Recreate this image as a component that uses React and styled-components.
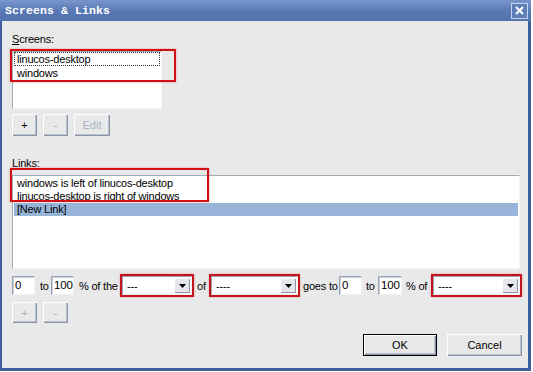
import React from "react";
import styled, { createGlobalStyle } from "styled-components";

const GlobalStyle = createGlobalStyle`
  html, body {
    margin: 0;
    padding: 0;
    background: #ffffff;
  }
  body {
    font-family: "Liberation Sans", Arial, sans-serif;
    font-size: 11px;
    letter-spacing: -0.2px;
    color: #000;
  }
`;

const Window = styled.div`
  width: 531px;
  height: 371px;
  box-sizing: border-box;
  border-left: 2px solid #3f5f9f;
  border-right: 3px solid #3f5f9f;
  border-bottom: 3px solid #3f5f9f;
  background: #e9e9e9;
  display: flex;
  flex-direction: column;
`;

const TitleBar = styled.div`
  height: 21px;
  margin-left: -2px;
  margin-right: -3px;
  background: linear-gradient(#7897cd, #5878b4 55%, #5473b0);
  display: flex;
  align-items: center;
  justify-content: space-between;
  padding: 0 3px 0 5px;
  box-sizing: border-box;
`;

const Title = styled.span`
  font-family: "Liberation Mono", "DejaVu Sans Mono", monospace;
  font-weight: bold;
  font-size: 11.5px;
  color: #ffffff;
  letter-spacing: 0.1px;
`;

const CloseBox = styled.div`
  width: 15px;
  height: 14px;
  border: 1px solid #c9d5ec;
  display: flex;
  align-items: center;
  justify-content: center;
  background: #5e7eb9;
`;

const Body = styled.div`
  flex: 1;
  display: flex;
  flex-direction: column;
  padding: 12px 0 0 10px;
`;

const Label = styled.div`
  height: 13px;
  line-height: 13px;
  margin-top: ${(p) => p.$top || 0}px;
`;

const Under = styled.span`
  text-decoration: underline;
`;

const ListWrap = styled.div`
  position: relative;
  margin-top: 5px;
  width: ${(p) => p.$w}px;
  height: ${(p) => p.$h}px;
`;

const ListBox = styled.div`
  width: 100%;
  height: 100%;
  box-sizing: border-box;
  background: #fff;
  border: 1px solid;
  border-color: #a3acb9 #f4f4f4 #f4f4f4 #a3acb9;
  padding-top: ${(p) => p.$pad || 0}px;
  overflow: hidden;
`;

const Item = styled.div`
  height: ${(p) => p.$h || 13}px;
  line-height: ${(p) => p.$h || 13}px;
  padding-left: 3px;
  box-sizing: border-box;
  margin: 0 1px;
  white-space: nowrap;
  background: ${(p) => (p.$selected ? "#98b4d9" : "transparent")};
  outline: ${(p) => (p.$focus ? "1px dotted #333" : "none")};
  outline-offset: -1px;
`;

const Annotation = styled.div`
  position: absolute;
  left: ${(p) => p.$x}px;
  top: ${(p) => p.$y}px;
  width: ${(p) => p.$w}px;
  height: ${(p) => p.$h}px;
  box-sizing: border-box;
  border: 2px solid #d10f14;
  box-shadow: 0 0 2px rgba(230, 60, 60, 0.45);
  pointer-events: none;
`;

const ButtonRow = styled.div`
  display: flex;
  gap: 6px;
  margin-top: ${(p) => p.$top || 5}px;
`;

const Button = styled.button`
  width: ${(p) => p.$w || 25}px;
  height: ${(p) => p.$h || 22}px;
  box-sizing: border-box;
  padding: 0;
  margin: 0;
  border: none;
  background: #e9e9e9;
  font-family: "Liberation Sans", Arial, sans-serif;
  font-size: 11px;
  color: ${(p) => (p.disabled ? "#a7b1c0" : "#000")};
  box-shadow: inset 1px 1px #ffffff, inset -1px -1px #8a96a8,
    inset -2px -2px #b9c1cd;
`;

const DefaultButton = styled(Button)`
  border: 1px solid #000;
`;

const ControlRow = styled.div`
  display: flex;
  align-items: center;
  height: 23px;
  margin-top: 5px;
`;

const Text = styled.span`
  margin-left: ${(p) => p.$ml || 0}px;
  width: ${(p) => p.$w}px;
  flex: none;
  white-space: nowrap;
`;

const Field = styled.div`
  width: ${(p) => p.$w}px;
  height: 19px;
  flex: none;
  box-sizing: border-box;
  background: #fff;
  border: 1px solid;
  border-color: #9aa6b8 #f2f2f2 #f2f2f2 #9aa6b8;
  box-shadow: inset 1px 1px #c9d0da;
  padding-left: 2px;
  line-height: 17px;
  font-size: 11.5px;
  overflow: hidden;
`;

const RedFrame = styled.div`
  flex: none;
  border: 2px solid #c5141c;
  box-shadow: 0 0 2px rgba(230, 60, 60, 0.4);
`;

const Combo = styled.div`
  width: ${(p) => p.$w}px;
  height: 19px;
  box-sizing: border-box;
  background: #fff;
  border: 1px solid;
  border-color: #9aa6b8 #f2f2f2 #f2f2f2 #9aa6b8;
  display: flex;
  align-items: center;
  justify-content: space-between;
  padding: 0 1px 0 4px;
`;

const ArrowButton = styled.div`
  width: 16px;
  height: 15px;
  box-sizing: border-box;
  background: #e4e6ea;
  box-shadow: inset 1px 1px #ffffff, inset -1px -1px #8a96a8;
  display: flex;
  align-items: center;
  justify-content: center;
`;

const Footer = styled.div`
  display: flex;
  justify-content: flex-end;
  gap: 10px;
  margin-top: 11px;
  padding-right: 6px;
`;

const Arrow = () => (
  <svg width="7" height="4" viewBox="0 0 7 4">
    <path d="M0 0h7L3.5 4z" fill="#000" />
  </svg>
);

const Dropdown = ({ w, value }) => (
  <RedFrame>
    <Combo $w={w}>
      <span>{value}</span>
      <ArrowButton>
        <Arrow />
      </ArrowButton>
    </Combo>
  </RedFrame>
);

export default function App() {
  return (
    <>
      <GlobalStyle />
      <Window>
        <TitleBar>
          <Title>Screens &amp; Links</Title>
          <CloseBox>
            <svg width="9" height="9" viewBox="0 0 9 9">
              <path d="M1 1l7 7M8 1L1 8" stroke="#fff" strokeWidth="2" />
            </svg>
          </CloseBox>
        </TitleBar>
        <Body>
          <Label>
            <Under>S</Under>creens:
          </Label>
          <ListWrap $w={150} $h={58}>
            <ListBox>
              <Item $focus $h={14}>linucos-desktop</Item>
              <Item $h={14}>windows</Item>
            </ListBox>
            <Annotation $x={-2} $y={-2} $w={166} $h={33} />
          </ListWrap>
          <ButtonRow>
            <Button>+</Button>
            <Button disabled>-</Button>
            <Button disabled $w={36}>
              Edit
            </Button>
          </ButtonRow>
          <Label $top={21}>
            <Under>L</Under>inks:
          </Label>
          <ListWrap $w={508} $h={94}>
            <ListBox $pad={1}>
              <Item>windows is left of linucos-desktop</Item>
              <Item>linucos-desktop is right of windows</Item>
              <Item $selected>[New Link]</Item>
            </ListBox>
            <Annotation $x={-2} $y={-7} $w={199} $h={34} />
          </ListWrap>
          <ControlRow>
            <Field $w={23}>0</Field>
            <Text $ml={5} $w={11}>to</Text>
            <Field $w={23}>100</Field>
            <Text $ml={5} $w={41}>% of the</Text>
            <Dropdown w={70} value="---" />
            <Text $ml={3} $w={12}>of</Text>
            <Dropdown w={87} value="----" />
            <Text $ml={3} $w={36}>goes to</Text>
            <Field $w={23}>0</Field>
            <Text $ml={4} $w={12}>to</Text>
            <Field $w={24}>100</Field>
            <Text $ml={4} $w={25}>% of</Text>
            <Dropdown w={87} value="----" />
          </ControlRow>
          <ButtonRow>
            <Button disabled $h={21}>
              +
            </Button>
            <Button disabled $h={21}>
              -
            </Button>
          </ButtonRow>
          <Footer>
            <DefaultButton $w={74}>OK</DefaultButton>
            <Button $w={75}>Cancel</Button>
          </Footer>
        </Body>
      </Window>
    </>
  );
}
